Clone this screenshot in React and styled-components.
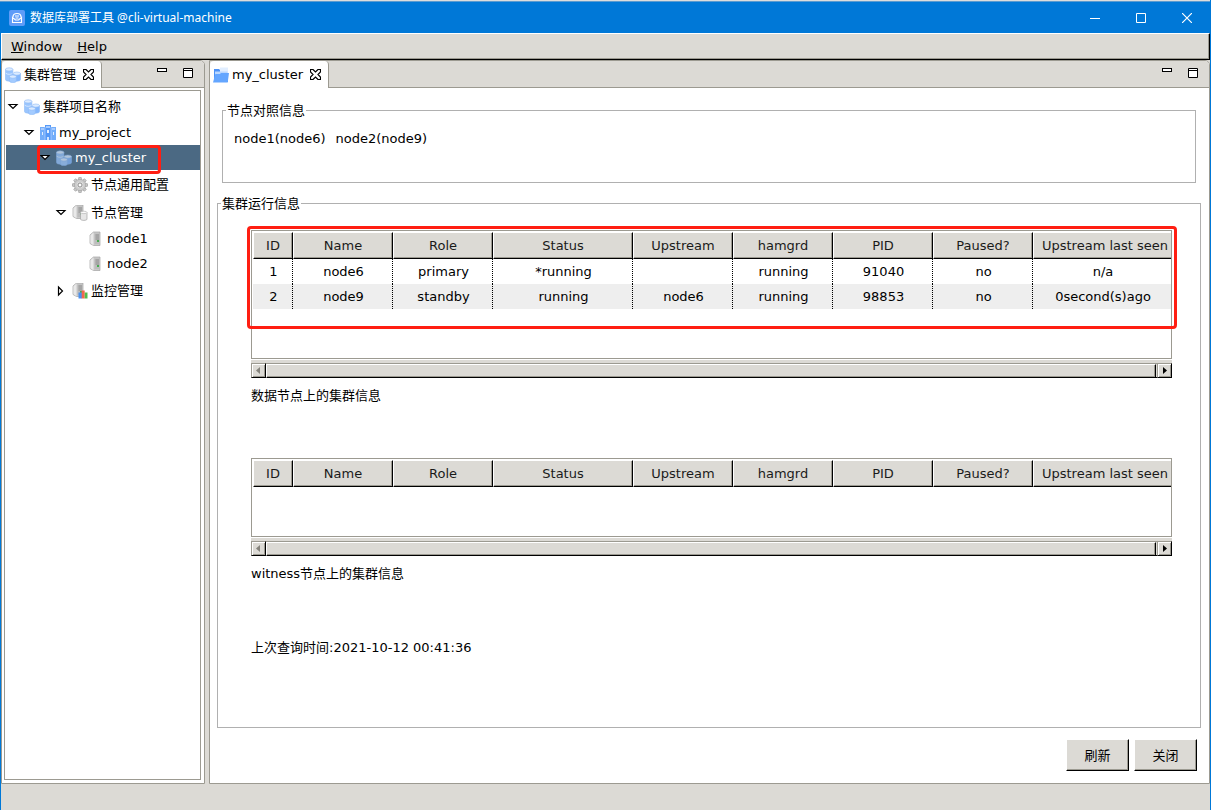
import React from "react";
import styled, { createGlobalStyle, css } from "styled-components";

const GREY = "#dcdad5";
const EDGE = "#9c9a91";
const RED = "#ff1e12";

const GlobalStyle = createGlobalStyle`
  * {
    box-sizing: border-box;
  }
  body {
    margin: 0;
    color: #000;
    font: 13px/20px "DejaVu Sans", "Noto Sans CJK SC", sans-serif;
  }
  button {
    padding: 0;
    border: 0;
    background: none;
    color: inherit;
    font: inherit;
  }
  svg {
    display: block;
  }
`

const Window = styled.div`
  display: flex;
  flex-direction: column;
  min-height: 100vh;
  border: solid #0078d7;
  border-width: 0 1px;
  background: ${GREY};
`
const TitleBar = styled.header`
  display: flex;
  align-items: center;
  height: 33px;
  margin-left: -1px;
  padding: 1px 0 0 9px;
  border-top: 1px solid #dcdcdc;
  box-shadow: inset 0 1px #5b9bd0, 1px 0 #0078d7;
  background: #0078d7;
  color: #fff;
`
const Title = styled.h1`
  flex: 1;
  margin: 0 0 0 5px;
  font: 12px/20px "Noto Sans", "Noto Sans CJK SC", sans-serif;
`
const CaptionButton = styled.button`
  display: flex;
  align-items: center;
  justify-content: center;
  width: 46px;
  height: 31px;
`
const MenuBar = styled.nav`
  display: flex;
  gap: 15px;
  height: 27px;
  padding: 2px 9px 0;
  border: 1px solid #fff;
  border-right-color: #000;
  border-bottom-color: #000;
  box-shadow: inset -1px -1px ${EDGE};
  line-height: 21px;
`
const MenuItem = styled.button`
  height: 21px;
  &::first-letter {
    text-decoration: underline;
  }
`
const Workbench = styled.main`
  display: flex;
  flex: 1;
  gap: 4px;
`
const Pane = styled.section`
  display: flex;
  flex-direction: column;
  flex: ${({ $width }) => ($width ? `0 0 ${$width}px` : "1")};
  min-width: 0;
  border: 1px solid ${EDGE};
  border-radius: 0 5px 0 0;
  background: #fff;
`
const TabBar = styled.div`
  display: flex;
  height: 27px;
  border-bottom: 1px solid ${EDGE};
  border-radius: 0 4px 0 0;
  background: ${GREY};
`
const Tab = styled.div`
  display: flex;
  align-items: center;
  gap: 3px;
  height: 27px;
  padding: 0 7px 0 3px;
  border-right: 1px solid ${EDGE};
  border-radius: 4px 4px 0 0;
  background: #fff;
`
const CloseTab = styled.button`
  margin-left: 4px;
`
const PaneTools = styled.div`
  display: flex;
  align-items: flex-start;
  gap: 16px;
  margin-left: auto;
  padding: 7px 11px 0 0;
`
const Tree = styled.ul`
  flex: 1;
  margin: 2px 3px 3px 2px;
  padding: 1px 0;
  border: 1px solid ${EDGE};
  list-style: none;
`
const TreeItem = styled.li`
  position: relative;
  display: flex;
  align-items: center;
  gap: 3px;
  height: ${({ $tall }) => ($tall ? 28 : 25)}px;
  margin-left: 1px;
  padding-top: ${({ $tall }) => ($tall ? 2 : 0)}px;
  padding-left: ${({ $level }) => $level * 16 + 1}px;
  ${({ $selected }) => $selected && css`
    background: #4b6983;
    color: #fff;
  `}
`
const Twisty = styled.button`
  width: 14px;
  height: 12px;
`
const Mark = styled.span`
  position: absolute;
  top: ${({ $tight }) => ($tight ? 0 : -4)}px;
  left: ${({ $tight }) => ($tight ? 31 : -4)}px;
  width: ${({ $tight }) => ($tight ? "124px" : "calc(100% + 9px)")};
  height: ${({ $tight }) => ($tight ? 29 : 103)}px;
  border: 3px solid ${RED};
  border-radius: 4px;
  pointer-events: none;
  z-index: 1;
`
const Editor = styled.div`
  display: flex;
  flex-direction: column;
  flex: 1;
  padding: 11px 8px 12px 7px;
`
const Group = styled.fieldset`
  min-width: 0;
  margin: 0;
  padding: 0;
  border: 1px solid #b0b0b0;
`
const Legend = styled.legend`
  margin-left: 3px;
  padding: 2px 1px 0;
`
const NodeGroup = styled(Group)`
  height: 84px;
  margin: 0 5px 9px;
`
const NodeList = styled.div`
  display: flex;
  gap: 10px;
  padding: 8px 11px;
`
const RunGroup = styled(Group)`
  flex: 1;
`
const RunBody = styled.div`
  padding: 16px 28px 0 33px;
`
const ClusterView = styled.section`
  position: relative;
  margin-bottom: 52px;
`
const TableFrame = styled.div`
  height: ${({ $rows }) => ($rows ? 129 : 79)}px;
  padding: 1px 0 0 1px;
  overflow: hidden;
  border: 1px solid ${EDGE};
`
const Table = styled.table`
  width: 924px;
  table-layout: fixed;
  border-spacing: 0;
  text-align: center;
`
const Th = styled.th`
  width: ${({ $width }) => $width}px;
  height: 27px;
  padding: 0;
  border: 1px solid #fff;
  border-right-color: #000;
  border-bottom-color: #000;
  box-shadow: inset -1px -1px ${EDGE};
  background: ${GREY};
  color: #1a1a1a;
  font-weight: normal;
  white-space: nowrap;
`
const Td = styled.td`
  height: 25px;
  padding: 0 0 0 2px;
  border-right: 1px dotted #000;
  &:last-child {
    padding: 0 3px 0 0;
  }
  tr:nth-child(even) > & {
    background: #eee;
  }
`
const ScrollBar = styled.div`
  display: flex;
  height: 18px;
  margin-top: 1px;
  border-top: 3px solid ${GREY};
  background: ${GREY};
  box-shadow: inset 1px 1px ${EDGE}, inset 0 -1px #000;
`
const ScrollButton = styled.button`
  display: flex;
  align-items: center;
  justify-content: center;
  width: 15px;
  border: 1px solid;
  border-color: ${EDGE} #000 #000 ${EDGE};
  box-shadow: inset 1px 1px #fff, inset -1px -1px ${EDGE};
`
const Thumb = styled.div`
  flex: 1;
  margin: 1px 1px 0 0;
  border: 1px solid #fff;
  border-right-color: #000;
  border-bottom-color: #000;
  box-shadow: inset -1px -1px ${EDGE};
`
const Caption = styled.p`
  margin: 8px 0 0;
`
const QueryTime = styled.p`
  margin: 54px 0 0;
`
const Actions = styled.div`
  display: flex;
  justify-content: flex-end;
  gap: 5px;
  padding: 11px 4px 0;
`
const PushButton = styled.button`
  width: 63px;
  height: 32px;
  padding-top: 2px;
  border: 1px solid #fff;
  border-right-color: #000;
  border-bottom-color: #000;
  box-shadow: inset -1px -1px ${EDGE};
  background: ${GREY};
`
const StatusBar = styled.footer`
  height: 26px;
`

const Svg = ({ w = 16, h = 16, children }) => (
  <svg width={ w } height={ h } viewBox={ `0 0 ${w} ${h}` } aria-hidden="true">{ children }</svg>
)

const Cylinder = ({ x, y, rx, h, fill }) => (
  <g stroke="#8dbbf7" strokeWidth=".6">
    <path d={ `M${x - rx} ${y}v${h}a${rx} 1.600 0 0 0 ${rx * 2} 0v${-h}z` } fill={ fill } />
    <ellipse cx={ x } cy={ y } rx={ rx } ry="1.600" fill="#dcebff" />
  </g>
)
const ClusterIcon = ({ dim }) => (
  <Svg>
    <g opacity={ dim ? 0.7 : 1 }>
      <Cylinder x={ 4.2 } y={ 2.4 } rx={ 3.7 } h={ 10.2 } fill="#9ac5fd" />
      <path d="M.7 6.200c1.500 1.500 5.500 1.500 7 0" fill="none" stroke="#d3e6ff" />
      <Cylinder x={ 11.8 } y={ 6.6 } rx={ 3.7 } h={ 6 } fill="#84b7fc" />
      <Cylinder x={ 7.9 } y={ 9.6 } rx={ 3.4 } h={ 4.4 } fill="#a3cbff" />
    </g>
  </Svg>
)
const ProjectIcon = () => (
  <Svg>
    <path d="M0 2h5v13H0zM11 2h5v13h-5z" fill="#72adfa" />
    <path d="M5 0h6v15H5z" fill="#5599f7" />
    <path d="M1 3h3v2H1zM12 3h3v2h-3zM6 1h4v2H6z" fill="#a9cdff" />
    <path d="M2 7h1v3H2zM13 7h1v3h-1zM7 5h2v3H7z" fill="#e3efff" />
    <path d="M7 12h2v3H7z" fill="#d5e7ff" />
    <path d="M5 2v13M11 2v13" stroke="#b9d6ff" strokeWidth=".7" />
  </Svg>
)
const FolderIcon = () => (
  <Svg>
    <path d="M1 15V2h5l1.500 1.500H15V15z" fill="#4c92f7" />
    <path d="M7 .5h8V8H7z" fill="#e1eeff" />
    <path d="M2 4.500h12.500V8H2z" fill="#b9d7ff" />
    <path d="M0 15.500L2.300 7H7l1-1h8l-1.300 9.500z" fill="#64a6ff" />
  </Svg>
)
const GearIcon = () => (
  <Svg>
    <g fill="#c9c9c9" stroke="#969696" strokeWidth=".6">
      { [0, 45, 90, 135, 180, 225, 270, 315].map(a => (
        <path key={ a } d="M6.300 3L6.800.400h2.400L9.700 3z" transform={ `rotate(${a} 8 8)` } />
      )) }
    </g>
    <circle cx="8" cy="8" r="5.600" fill="#cdcdcd" stroke="#a0a0a0" strokeWidth=".5" />
    <circle cx="8" cy="8" r="3.300" fill="#dedede" />
    <circle cx="8" cy="8" r="2" fill="#fff" stroke="#858585" strokeWidth=".9" />
  </Svg>
)
const ServerShape = () => (
  <>
    <path d="M2 4L5.500 1H12v13.500H5.500L2 12.500z" fill="#c9c9c9" stroke="#a3a3a3" strokeWidth=".7" />
    <path d="M2.400 4.200L5.500 1.500v12.700l-3.100-2z" fill="#e9e9e9" />
    <path d="M6.500 2.500H11V13H6.500z" fill="#bdbdbd" />
    <path d="M7.500 4H11M7.500 6H11M7.500 8H11" stroke="#8c8c8c" />
    <path d="M9 9h2v2H9z" fill="#46ad50" />
  </>
)
const ServerIcon = () => <Svg><ServerShape /></Svg>
const NodesIcon = () => (
  <Svg>
    <g transform="translate(-1 -1)"><ServerShape /></g>
    <path d="M8.500 7.500v6.700c0 .6 1.500 1.200 3.300 1.200s3.200-.6 3.200-1.200V7.500z" fill="#e6e6e6" stroke="#a3a3a3" strokeWidth=".7" />
    <ellipse cx="11.800" cy="7.400" rx="3.200" ry="1.200" fill="#fafafa" stroke="#adadad" strokeWidth=".6" />
  </Svg>
)
const MonitorIcon = () => (
  <Svg>
    <g transform="translate(-1 -1)"><ServerShape /></g>
    <path d="M6.500 9.500H10v6H6.500z" fill="#4a90ee" />
    <path d="M9.700 7.500h3v8h-3z" fill="#f2674d" />
    <path d="M12.700 9.500H15.500v6h-2.800z" fill="#51bd4b" />
  </Svg>
)
const AppIcon = () => (
  <Svg>
    <rect width="16" height="16" rx="2" fill="#5f9cf8" />
    <path d="M4 7C4 4.500 5.500 3.500 8 3.500s4 1 4 3.500" fill="none" stroke="#fff" strokeWidth="1.200" />
    <path d="M3.500 7.500v5h9v-5L9.500 10h-3z" fill="none" stroke="#fff" strokeWidth="1.100" />
    <path d="M6 6h4M6.500 8h3" fill="none" stroke="#fff" />
  </Svg>
)
const CloseIcon = () => (
  <Svg w={ 11 } h={ 11 }>
    <path d="M.5.5h2.500L5.500 3 8 .5h2.500V3L8 5.500 10.500 8v2.500H8L5.500 8 3 10.500H.5V8L3 5.500.5 3z" fill="#fff" stroke="#000" strokeWidth="1.200" />
  </Svg>
)
const MinimizeIcon = () => (
  <Svg w={ 10 } h={ 4 }><rect x=".5" y=".5" width="9" height="3" fill="#fff" stroke="#000" /></Svg>
)
const MaximizeIcon = () => (
  <Svg w={ 10 } h={ 10 }><path d="M.5.5h9v9h-9zM0 2.500h10" fill="#fff" stroke="#000" /></Svg>
)

const treeItems = [
  { label: "集群项目名称", level: 0, icon: ClusterIcon, open: true, tall: true },
  { label: "my_project", level: 1, icon: ProjectIcon, open: true },
  { label: "my_cluster", level: 2, icon: ClusterIcon, open: true, selected: true },
  { label: "节点通用配置", level: 3, icon: GearIcon, leaf: true, tall: true },
  { label: "节点管理", level: 3, icon: NodesIcon, open: true, tall: true },
  { label: "node1", level: 4, icon: ServerIcon, leaf: true },
  { label: "node2", level: 4, icon: ServerIcon, leaf: true },
  { label: "监控管理", level: 3, icon: MonitorIcon, open: false, tall: true }
]

const columns = [
  ["ID", 40],
  ["Name", 100],
  ["Role", 100],
  ["Status", 140],
  ["Upstream", 100],
  ["hamgrd", 100],
  ["PID", 100],
  ["Paused?", 100],
  ["Upstream last seen", 144]
]

const clusterRows = [
  ["1", "node6", "primary", "*running", "", "running", "91040", "no", "n/a"],
  ["2", "node9", "standby", "running", "node6", "running", "98853", "no", "0second(s)ago"]
]

const PaneHeader = ({ icon: Icon, title }) => (
  <TabBar>
    <Tab>
      <Icon />
      <span>{ title }</span>
      <CloseTab aria-label="close tab"><CloseIcon /></CloseTab>
    </Tab>
    <PaneTools>
      <button aria-label="minimize view"><MinimizeIcon /></button>
      <button aria-label="maximize view"><MaximizeIcon /></button>
    </PaneTools>
  </TabBar>
)

const ClusterTable = ({ rows, caption, marked }) => (
  <ClusterView>
    { marked && <Mark /> }
    <TableFrame $rows={ rows.length }>
      <Table>
        <thead>
          <tr>
            { columns.map(([name, width]) => <Th key={ name } $width={ width }>{ name }</Th>) }
          </tr>
        </thead>
        <tbody>
          { rows.map(row => (
            <tr key={ row[0] }>
              { row.map((value, i) => <Td key={ columns[i][0] }>{ value }</Td>) }
            </tr>
          )) }
        </tbody>
      </Table>
    </TableFrame>
    <ScrollBar>
      <ScrollButton aria-label="scroll left">
        <Svg w={ 5 } h={ 7 }><path d="M4 0v7L0 3.500z" fill="#85837c" /></Svg>
      </ScrollButton>
      <Thumb />
      <ScrollButton aria-label="scroll right">
        <Svg w={ 5 } h={ 7 }><path d="M1 0v7l4-3.500z" /></Svg>
      </ScrollButton>
    </ScrollBar>
    <Caption>{ caption }</Caption>
  </ClusterView>
)

const App = () => (
  <Window>
    <GlobalStyle />
    <TitleBar>
      <AppIcon />
      <Title>数据库部署工具 @cli-virtual-machine</Title>
      <CaptionButton aria-label="minimize">
        <Svg w={ 10 } h={ 10 }><path d="M0 5.500h10" stroke="#fff" /></Svg>
      </CaptionButton>
      <CaptionButton aria-label="maximize">
        <Svg w={ 10 } h={ 10 }><path d="M.5.5h9v9h-9z" fill="none" stroke="#fff" /></Svg>
      </CaptionButton>
      <CaptionButton aria-label="close">
        <Svg w={ 10 } h={ 10 }><path d="M0 0l10 10M10 0L0 10" stroke="#fff" strokeWidth="1.200" /></Svg>
      </CaptionButton>
    </TitleBar>
    <MenuBar>
      <MenuItem>Window</MenuItem>
      <MenuItem>Help</MenuItem>
    </MenuBar>
    <Workbench>
      <Pane $width={ 204 }>
        <PaneHeader icon={ ClusterIcon } title="集群管理" />
        <Tree role="tree">
          { treeItems.map(({ label, level, icon: Icon, open, leaf, selected, tall }) => (
            <TreeItem
              key={ label }
              role="treeitem"
              aria-level={ level + 1 }
              aria-selected={ !!selected }
              $level={ level }
              $selected={ selected }
              $tall={ tall }
            >
              <Twisty as={ leaf ? "span" : "button" } aria-label={ leaf ? undefined : "toggle" }>
                { !leaf && (
                  <Svg w={ 12 } h={ 12 }>
                    <path d={ open ? "M2 3.500h8L6 7.500z" : "M3.500 2v8l4-4z" } fill="#fff" stroke="#000" strokeWidth="1.200" />
                  </Svg>
                ) }
              </Twisty>
              <Icon dim={ selected } />
              <span>{ label }</span>
              { selected && <Mark $tight /> }
            </TreeItem>
          )) }
        </Tree>
      </Pane>
      <Pane>
        <PaneHeader icon={ FolderIcon } title="my_cluster" />
        <Editor>
          <NodeGroup>
            <Legend>节点对照信息</Legend>
            <NodeList>
              <span>node1(node6)</span>
              <span>node2(node9)</span>
            </NodeList>
          </NodeGroup>
          <RunGroup>
            <Legend>集群运行信息</Legend>
            <RunBody>
              <ClusterTable rows={ clusterRows } caption="数据节点上的集群信息" marked />
              <ClusterTable rows={ [] } caption="witness节点上的集群信息" />
              <QueryTime>上次查询时间:2021-10-12 00:41:36</QueryTime>
            </RunBody>
          </RunGroup>
          <Actions>
            <PushButton>刷新</PushButton>
            <PushButton>关闭</PushButton>
          </Actions>
        </Editor>
      </Pane>
    </Workbench>
    <StatusBar />
  </Window>
)

export default App
